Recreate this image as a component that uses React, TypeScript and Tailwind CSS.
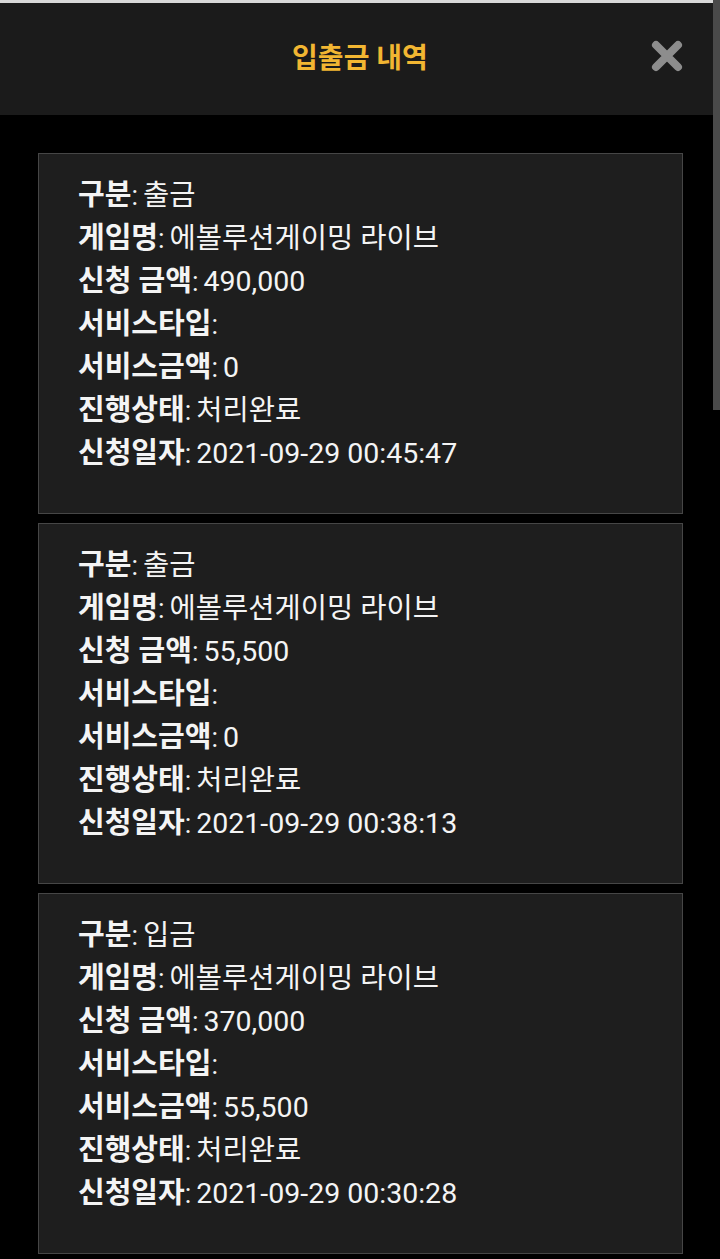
import React from 'react';

interface Record {
  kind: string;
  game: string;
  amount: string;
  serviceType: string;
  serviceAmount: string;
  status: string;
  date: string;
}

const records: Record[] = [
  {
    kind: '출금',
    game: '에볼루션게이밍 라이브',
    amount: '490,000',
    serviceType: '',
    serviceAmount: '0',
    status: '처리완료',
    date: '2021-09-29 00:45:47',
  },
  {
    kind: '출금',
    game: '에볼루션게이밍 라이브',
    amount: '55,500',
    serviceType: '',
    serviceAmount: '0',
    status: '처리완료',
    date: '2021-09-29 00:38:13',
  },
  {
    kind: '입금',
    game: '에볼루션게이밍 라이브',
    amount: '370,000',
    serviceType: '',
    serviceAmount: '55,500',
    status: '처리완료',
    date: '2021-09-29 00:30:28',
  },
];

const Row: React.FC<{ label: string; value: string }> = ({ label, value }) => (
  <div className="h-[43px] leading-[43px] whitespace-nowrap">
    <span className="font-bold text-[29px]">{label}</span>
    <span className="text-[27px]">:</span>
    <span className="text-[28.5px] ml-[5px]">{value}</span>
  </div>
);

const RecordCard: React.FC<{ record: Record }> = ({ record }) => (
  <div className="h-[361px] bg-[#1e1e1e] border border-[#464646] pl-[39px] pt-[20px] text-[#f4f4f4]">
    <Row label="구분" value={record.kind} />
    <Row label="게임명" value={record.game} />
    <Row label="신청 금액" value={record.amount} />
    <Row label="서비스타입" value={record.serviceType} />
    <Row label="서비스금액" value={record.serviceAmount} />
    <Row label="진행상태" value={record.status} />
    <Row label="신청일자" value={record.date} />
  </div>
);

export default function App() {
  return (
    <div
      className="relative w-[720px] h-[1259px] overflow-hidden bg-black"
      style={{ fontFamily: 'Roboto, "Noto Sans CJK KR", sans-serif' }}
    >
      <div className="h-[3px] bg-[#d9d9d9]" />
      <header className="relative h-[112px] bg-[#1b1b1b] flex items-center justify-center">
        <h1 className="text-[#f2b632] text-[28px] font-bold">입출금 내역</h1>
        <button className="absolute right-[36px] top-[36px] w-[34px] h-[34px] flex items-center justify-center">
          <svg width="34" height="34" viewBox="0 0 34 34">
            <path
              d="M6 6 L28 28 M28 6 L6 28"
              stroke="#8d8d8d"
              strokeWidth="8"
              strokeLinecap="round"
            />
          </svg>
        </button>
      </header>

      <main className="flex flex-col gap-[9px] pt-[38px] pl-[38px] pr-[37px]">
        {records.map((r, i) => (
          <RecordCard key={i} record={r} />
        ))}
      </main>

      <div className="absolute right-0 top-0 w-[7px] h-[410px] bg-[#4a4a4a]" />
    </div>
  );
}
